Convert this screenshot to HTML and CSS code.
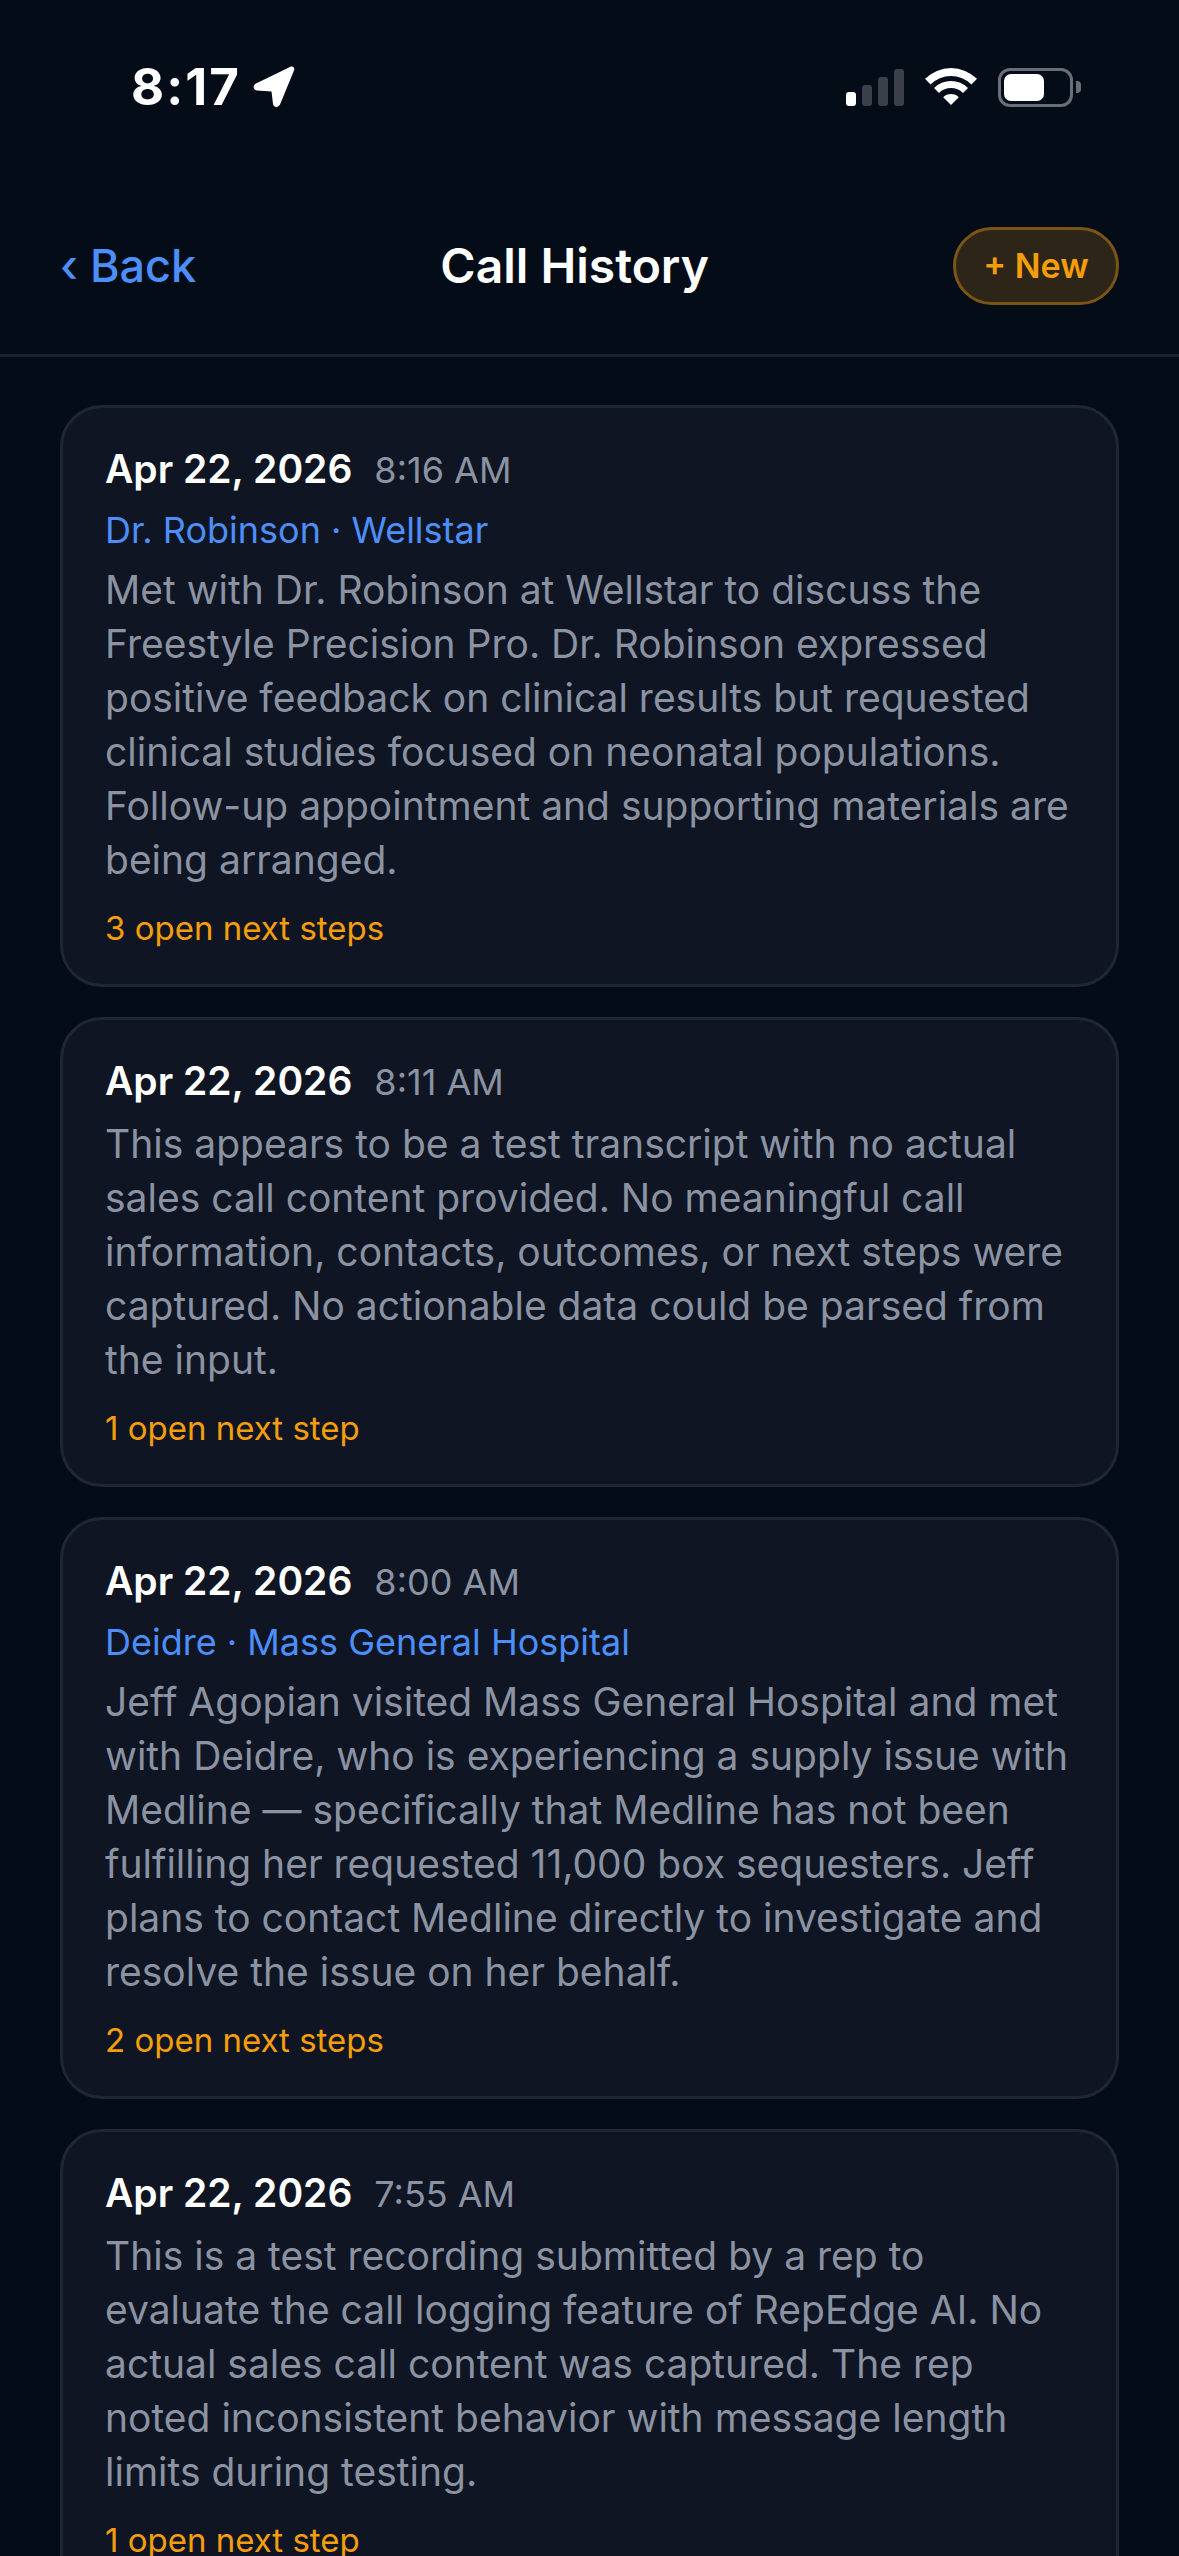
FILE: index.html
```html
<!DOCTYPE html>
<html lang="en">
<head>
    <meta charset="UTF-8">
    <meta name="viewport" content="width=device-width, initial-scale=1.0">
    <title>Call History</title>
    <link rel="stylesheet" href="styles.css">
</head>
<body>
    <div class="status-bar">
        <div class="status-left">
            <span class="clock">8:17</span>
            <svg class="icon-location" width="42" height="42" viewBox="0 0 42 42">
                <path d="M38 0.5 C40.5 0 42 2 41 4.5 L27 38.5 C25.5 42 20.5 41.5 20 38 L18.5 25.5 L4 24.5 C0 24 -0.5 19 3 17.5 Z" fill="#fff"/>
            </svg>
        </div>
        <div class="status-right">
            <div class="signal">
                <span class="bar bar-on bar-1"></span>
                <span class="bar bar-2"></span>
                <span class="bar bar-3"></span>
                <span class="bar bar-4"></span>
            </div>
            <svg class="icon-wifi" width="52" height="38" viewBox="0 0 52 38">
                <path d="M0 10.8 A37 37 0 0 1 52 10.8 L46.5 16.5 A29 29 0 0 0 5.5 16.5 Z" fill="#fff"/>
                <path d="M9 20 A24 24 0 0 1 43 20 L38 25 A17 17 0 0 0 14 25 Z" fill="#fff"/>
                <path d="M18.2 29.2 A11 11 0 0 1 33.8 29.2 L26 37 Z" fill="#fff"/>
            </svg>
            <div class="battery">
                <div class="battery-body"><div class="battery-level"></div></div>
                <div class="battery-nub"></div>
            </div>
        </div>
    </div>

    <div class="nav">
        <span class="back">‹ Back</span>
        <h1>Call History</h1>
        <button class="new-btn">+ New</button>
    </div>

    <div class="call-list">
        <div class="call-card">
            <div class="call-head"><span class="call-date">Apr 22, 2026</span><span class="call-time">8:16 AM</span></div>
            <div class="call-contact">Dr. Robinson · Wellstar</div>
            <p class="call-summary">Met with Dr. Robinson at Wellstar to discuss the Freestyle Precision Pro. Dr. Robinson expressed positive feedback on clinical results but requested clinical studies focused on neonatal populations. Follow-up appointment and supporting materials are being arranged.</p>
            <div class="call-steps">3 open next steps</div>
        </div>
        <div class="call-card">
            <div class="call-head"><span class="call-date">Apr 22, 2026</span><span class="call-time">8:11 AM</span></div>
            <p class="call-summary">This appears to be a test transcript with no actual sales call content provided. No meaningful call information, contacts, outcomes, or next steps were captured. No actionable data could be parsed from the input.</p>
            <div class="call-steps">1 open next step</div>
        </div>
        <div class="call-card">
            <div class="call-head"><span class="call-date">Apr 22, 2026</span><span class="call-time">8:00 AM</span></div>
            <div class="call-contact">Deidre · Mass General Hospital</div>
            <p class="call-summary">Jeff Agopian visited Mass General Hospital and met with Deidre, who is experiencing a supply issue with Medline — specifically that Medline has not been fulfilling her requested 11,000 box sequesters. Jeff plans to contact Medline directly to investigate and resolve the issue on her behalf.</p>
            <div class="call-steps">2 open next steps</div>
        </div>
        <div class="call-card">
            <div class="call-head"><span class="call-date">Apr 22, 2026</span><span class="call-time">7:55 AM</span></div>
            <p class="call-summary">This is a test recording submitted by a rep to evaluate the call logging feature of RepEdge AI. No actual sales call content was captured. The rep noted inconsistent behavior with message length limits during testing.</p>
            <div class="call-steps">1 open next step</div>
        </div>
    </div>
</body>
</html>
```

FILE: styles.css
```css
* {
    box-sizing: border-box;
}

html, body {
    height: 2556px;
    overflow: hidden;
}

body {
    font-family: Inter, "Noto Sans", sans-serif;
    background-color: #040c18;
    color: #fff;
    margin: 0;
}

/* status bar */
.status-bar {
    height: 227px;
    padding: 63px 98px 0 131px;
    display: flex;
    justify-content: space-between;
    align-items: flex-start;
}

.status-left {
    display: flex;
    align-items: center;
    gap: 12px;
    height: 48px;
}

.clock {
    font-size: 51px;
    font-weight: 700;
    line-height: 48px;
    letter-spacing: 2px;
}

.status-right {
    display: flex;
    align-items: center;
    height: 48px;
    gap: 21px;
}

.signal {
    display: flex;
    align-items: flex-end;
    gap: 6px;
    height: 37px;
}

.bar {
    width: 10px;
    border-radius: 3px;
    background-color: #3a3f4a;
}

.bar-on { background-color: #fff; }
.bar-1 { height: 14px; }
.bar-2 { height: 21px; }
.bar-3 { height: 29px; }
.bar-4 { height: 37px; }

.battery {
    display: flex;
    align-items: center;
    gap: 3px;
}

.battery-body {
    width: 75px;
    height: 39px;
    border: 3px solid #6a6e76;
    border-radius: 12px;
    padding: 3px;
}

.battery-level {
    width: 40px;
    height: 100%;
    background-color: #fff;
    border-radius: 7px;
}

.battery-nub {
    width: 5px;
    height: 12px;
    background-color: #6a6e76;
    border-radius: 0 4px 4px 0;
}

/* nav */
.nav {
    height: 130px;
    padding: 0 60px 50px;
    display: flex;
    justify-content: space-between;
    align-items: center;
    border-bottom: 3px solid #1b2230;
}

.back {
    font-size: 45px;
    font-weight: 500;
    color: #4d8ffa;
}

h1 {
    margin: 0;
    font-size: 48px;
    font-weight: 600;
}

.new-btn {
    width: 166px;
    height: 78px;
    border: 3px solid #7c5416;
    border-radius: 39px;
    background-color: #2d2517;
    color: #f59e0b;
    font-family: inherit;
    font-size: 34px;
    font-weight: 600;
    padding: 0;
}

/* cards */
.call-list {
    padding: 48px 60px 0;
    display: flex;
    flex-direction: column;
    gap: 30px;
}

.call-card {
    background-color: #0f1522;
    border: 3px solid #1f2635;
    border-radius: 42px;
    padding: 34px 42px 29px;
}

.call-head {
    display: flex;
    align-items: baseline;
    gap: 22px;
    line-height: 54px;
    margin-bottom: 8px;
}

.call-date {
    font-size: 39px;
    font-weight: 600;
}

.call-time {
    font-size: 36px;
    color: #8b93a3;
}

.call-contact {
    font-size: 36px;
    line-height: 54px;
    color: #4d8ffa;
    margin-top: -2px;
    margin-bottom: 6px;
}

.call-summary {
    margin: 0;
    font-size: 39px;
    line-height: 54px;
    color: #8b93a3;
}

.call-steps {
    margin-top: 14px;
    font-size: 33px;
    line-height: 54px;
    color: #f59e0b;
}
```
